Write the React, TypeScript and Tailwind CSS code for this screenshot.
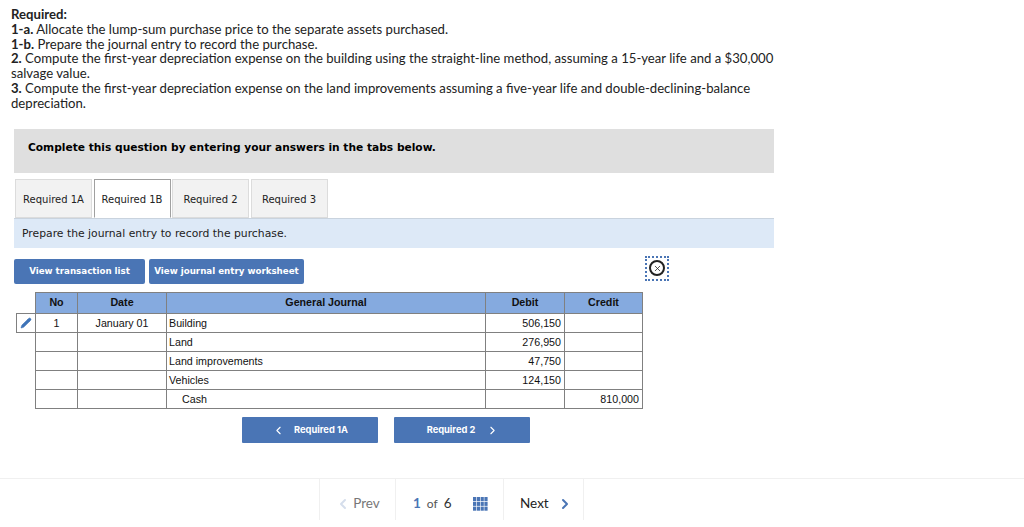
import { ChevronLeft, ChevronRight, Pencil, X } from "lucide-react";

const rows = [
  { no: "1", date: "January 01", account: "Building", debit: "506,150", credit: "" },
  { no: "", date: "", account: "Land", debit: "276,950", credit: "" },
  { no: "", date: "", account: "Land improvements", debit: "47,750", credit: "" },
  { no: "", date: "", account: "Vehicles", debit: "124,150", credit: "" },
  { no: "", date: "", account: "Cash", debit: "", credit: "810,000", indent: true },
];

const tabs = ["Required 1A", "Required 1B", "Required 2", "Required 3"];

export default function App() {
  return (
    <div className="h-[527px] w-[1024px] overflow-hidden bg-white font-['Lato',sans-serif] text-[#222]">
      {/* Question text */}
      <div className="w-[780px] pl-[11px] pt-[7px] text-[13.15px] leading-[14.8px]">
        <p className="font-bold">Required:</p>
        <p><b>1-a.</b> Allocate the lump-sum purchase price to the separate assets purchased.</p>
        <p><b>1-b.</b> Prepare the journal entry to record the purchase.</p>
        <p><b>2.</b> Compute the first-year depreciation expense on the building using the straight-line method, assuming a 15-year life and a $30,000 salvage value.</p>
        <p><b>3.</b> Compute the first-year depreciation expense on the land improvements assuming a five-year life and double-declining-balance depreciation.</p>
      </div>

      <div className="ml-[14px] mt-[18px] w-[760px]">
        <div className="flex h-[44px] items-center bg-[#dfdfdf] pb-[6px] pl-[14px] font-['DejaVu_Sans',sans-serif] text-[10.65px] font-bold text-black">
          Complete this question by entering your answers in the tabs below.
        </div>

        {/* Tabs */}
        <div className="mt-[6px] flex gap-[1.5px] border-b border-[#c9d3de] pl-px">
          {tabs.map((t, i) => (
            <div
              key={t}
              className={`flex h-[39px] w-[77px] items-center justify-center border pt-[2px] font-['DejaVu_Sans',sans-serif] text-[10px] text-[#222] ${
                i === 1 ? "-mb-px border-[#a0a0a0] border-b-white bg-white" : "border-[#dcdcdc] bg-[#f2f2f2]"
              }`}
            >
              {t}
            </div>
          ))}
        </div>
        <div className="flex h-[29px] items-center bg-[#dde9f7] pl-[8px] pt-[2px] font-['DejaVu_Sans',sans-serif] text-[10.8px] text-[#222]">
          Prepare the journal entry to record the purchase.
        </div>

        {/* Worksheet buttons */}
        <div className="mt-[8px] flex items-start">
          <div className="mt-[3px] flex gap-[4px] font-['DejaVu_Sans',sans-serif] text-[8.7px] font-bold whitespace-nowrap text-white">
            <div className="flex h-[25px] w-[131px] items-center justify-center rounded-[2px] bg-[#4a75b5]">View transaction list</div>
            <div className="flex h-[25px] w-[155px] items-center justify-center rounded-[2px] bg-[#4a75b5]">View journal entry worksheet</div>
          </div>
          <div className="ml-[341px] flex h-[25px] w-[24px] items-center justify-center border-2 border-dotted border-[#4a75b5]">
            <div className="flex h-[16px] w-[16px] items-center justify-center rounded-full border-2 border-[#222]">
              <X size={9} strokeWidth={2} className="text-[#222]" />
            </div>
          </div>
        </div>
      </div>

      {/* Journal table */}
      <table className="ml-[16px] mt-[8px] table-fixed border-collapse font-['Liberation_Sans',sans-serif] text-[10.7px] text-[#111]">
        <thead>
          <tr className="h-[21px]">
            <th className="w-[19px]" />
            <th className="w-[42px] border border-[#808080] bg-[#85aadf] pb-px font-bold">No</th>
            <th className="w-[89px] border border-[#808080] bg-[#85aadf] pb-px font-bold">Date</th>
            <th className="w-[319px] border border-[#808080] bg-[#85aadf] pb-px font-bold">General Journal</th>
            <th className="w-[79px] border border-[#808080] bg-[#85aadf] pb-px font-bold">Debit</th>
            <th className="w-[78px] border border-[#808080] bg-[#85aadf] pb-px font-bold">Credit</th>
          </tr>
        </thead>
        <tbody>
          {rows.map((r, i) => (
            <tr key={i} className="h-[19px] leading-[16px]">
              <td className={i === 0 ? "border border-[#808080] text-center" : ""}>
                {i === 0 && <Pencil size={12} fill="#3f74b8" strokeWidth={1} className="mx-auto text-[#3f74b8]" />}
              </td>
              <td className="border border-[#808080] pt-px text-center">{r.no}</td>
              <td className="border border-[#808080] pt-px text-center">{r.date}</td>
              <td className={`border border-[#808080] pt-px ${r.indent ? "pl-[15px]" : "pl-[2px]"}`}>{r.account}</td>
              <td className="border border-[#808080] pr-[3px] pt-px text-right">{r.debit}</td>
              <td className="border border-[#808080] pr-[3px] pt-px text-right">{r.credit}</td>
            </tr>
          ))}
        </tbody>
      </table>

      {/* Tab navigation */}
      <div className="ml-[242px] mt-[8px] flex gap-[16px] font-['Inter',sans-serif] text-[9.3px] font-bold text-white">
        <div className="flex h-[26px] w-[136px] items-center justify-center gap-[9px] rounded-[1px] bg-[#4a75b5] pt-px">
          <ChevronLeft size={13} strokeWidth={2} />
          <span>Required 1A</span>
        </div>
        <div className="flex h-[26px] w-[136px] items-center justify-center gap-[11px] rounded-[1px] bg-[#4a75b5] pl-[2px] pt-px">
          <span>Required 2</span>
          <ChevronRight size={13} strokeWidth={2} />
        </div>
      </div>

      {/* Footer pager */}
      <div className="mt-[35px] h-[41px] border-t border-[#f0f0f0] pl-[319px]">
        <div className="flex h-[41px] items-center">
          <div className="flex h-[41px] w-[77px] items-center justify-center gap-[2px] border-x border-[#f0f0f0] pt-[9px] text-[13.5px] text-[#777]">
            <ChevronLeft size={16} strokeWidth={3} className="text-[#d5deec]" />
            <span>Prev</span>
          </div>
          <div className="flex h-[41px] w-[107px] items-center justify-start gap-[6px] pl-[17px] pt-[9px] text-[13.5px]">
            <span className="font-bold text-[#4a75b5]">1</span>
            <span className="text-[12px] text-[#555]">of</span>
            <span className="text-[#333]">6</span>
            <svg width="15" height="14" viewBox="0 0 15 14" className="ml-[15px]">
              {[0, 1, 2].map((y) =>
                [0, 1, 2, 3].map((x) => (
                  <rect key={`${x}-${y}`} x={x * 3.8} y={y * 4.8} width="3.2" height="4.1" fill="#4a75b5" />
                ))
              )}
            </svg>
          </div>
          <div className="flex h-[41px] w-[81px] items-center justify-start gap-[8px] border-x border-[#f0f0f0] pl-[16px] pt-[9px] text-[13.5px] text-[#222]">
            <span>Next</span>
            <ChevronRight size={16} strokeWidth={3} className="text-[#4a75b5]" />
          </div>
        </div>
      </div>
    </div>
  );
}
